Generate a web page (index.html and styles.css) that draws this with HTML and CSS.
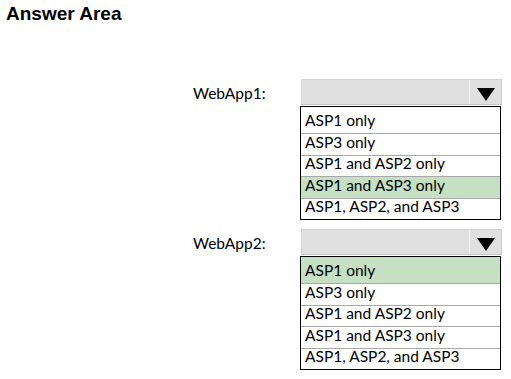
FILE: index.html
```html
<!DOCTYPE html>
<html lang="en">
<head>
  <meta charset="UTF-8">
  <meta name="viewport" content="width=device-width, initial-scale=1.0">
  <title>Answer Area</title>
  <link rel="stylesheet" href="styles.css">
</head>
<body>

  <h1 class="title">Answer Area</h1>

  <div class="question q1">
    <div class="label">WebApp1:</div>
    <div class="dropdown">
      <div class="select">
        <span class="select-value"></span>
        <span class="select-arrow">
          <svg width="18" height="13" viewBox="0 0 18 13"><polygon points="0,0 18,0 9,13" fill="#000"/></svg>
        </span>
      </div>
      <ul class="options">
        <li>ASP1 only</li>
        <li>ASP3 only</li>
        <li>ASP1 and ASP2 only</li>
        <li class="selected">ASP1 and ASP3 only</li>
        <li>ASP1, ASP2, and ASP3</li>
      </ul>
    </div>
  </div>

  <div class="question q2">
    <div class="label">WebApp2:</div>
    <div class="dropdown">
      <div class="select">
        <span class="select-value"></span>
        <span class="select-arrow">
          <svg width="18" height="13" viewBox="0 0 18 13"><polygon points="0,0 18,0 9,13" fill="#000"/></svg>
        </span>
      </div>
      <ul class="options">
        <li class="selected">ASP1 only</li>
        <li>ASP3 only</li>
        <li>ASP1 and ASP2 only</li>
        <li>ASP1 and ASP3 only</li>
        <li>ASP1, ASP2, and ASP3</li>
      </ul>
    </div>
  </div>

</body>
</html>
```

FILE: styles.css
```css
* {
  box-sizing: border-box;
}

body {
  margin: 0;
  padding: 0;
  background: #fff;
  color: #000;
  font-family: Lato, "Open Sans", sans-serif;
  font-size: 15.5px;
}

.title {
  margin: 0;
  padding: 4px 0 0 6px;
  font-family: "Liberation Sans", Arial, sans-serif;
  font-size: 19px;
  line-height: 19px;
  font-weight: bold;
}

/* question rows */
.question {
  display: flex;
  margin-left: 193px;
}

.q1 {
  margin-top: 56px;
}

.q2 {
  margin-top: 9px;
}

.label {
  width: 107px;
  padding-top: 5px;
  line-height: 18px;
}

.dropdown {
  width: 202px;
}

.select {
  display: flex;
  height: 26px;
  margin: 0 0 1px 1px;
  background: #e0e0e0;
  border: 1px solid #d2d2d2;
  border-bottom-color: #c4c4c4;
}

.select-value {
  flex: 1;
}

.select-arrow {
  width: 32px;
  display: flex;
  justify-content: center;
  align-items: flex-start;
  padding-top: 8px;
  border-left: 1px solid #f2f2f2;
}

.select-arrow svg {
  display: block;
}

/* option list */
.options {
  list-style: none;
  margin: 0 1px 0 0;
  padding: 0;
  border: 1px solid #000;
}

.options li {
  display: flex;
  align-items: flex-end;
  height: 21.5px;
  padding: 0 4px 4px;
  line-height: 18px;
  border-top: 1px solid #a8a8a8;
}

.options li:first-child {
  height: 26px;
  border-top: none;
}

.options li.selected {
  background: #c6e0c4;
}
```
